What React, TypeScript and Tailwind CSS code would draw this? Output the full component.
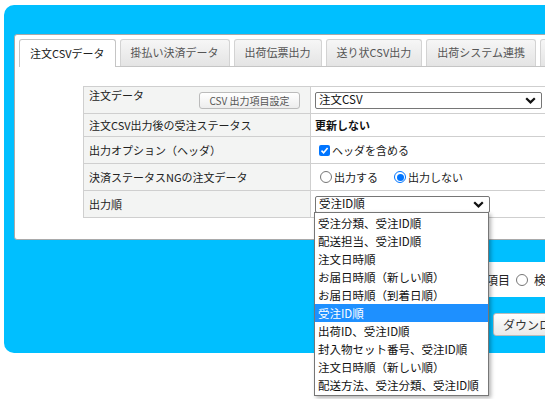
import React from "react"

const tabs = ["注文CSVデータ", "掛払い決済データ", "出荷伝票出力", "送り状CSV出力", "出荷システム連携", "その他"]

const sortOptions = [
  "受注分類、受注ID順",
  "配送担当、受注ID順",
  "注文日時順",
  "お届日時順（新しい順）",
  "お届日時順（到着日順）",
  "受注ID順",
  "出荷ID、受注ID順",
  "封入物セット番号、受注ID順",
  "注文日時順（新しい順）",
  "配送方法、受注分類、受注ID順",
]

function Chevron() {
  return (
    <svg width="11" height="7" viewBox="0 0 11 7" className="shrink-0">
      <path d="M1.2 1.2 5.5 5.4 9.8 1.2" fill="none" stroke="#111" strokeWidth="2.2" />
    </svg>
  )
}

function Select({ value, width }: { value: string; width: string }) {
  return (
    <div
      className={`flex h-[17px] items-center justify-between rounded-[2px] border border-[#767676] bg-white pl-[3px] pr-[5px] text-[11.5px] leading-none text-[#111] ${width}`}
    >
      <span>{value}</span>
      <Chevron />
    </div>
  )
}

function Radio({ checked }: { checked?: boolean }) {
  if (checked) {
    return (
      <span className="flex h-[12px] w-[12px] items-center justify-center rounded-full border-[1.5px] border-[#0075ff] bg-white">
        <span className="h-[7px] w-[7px] rounded-full bg-[#0075ff]" />
      </span>
    )
  }
  return <span className="h-[12px] w-[12px] rounded-full border border-[#767676] bg-white" />
}

function Row({
  label,
  children,
  h,
  top,
  extra,
}: {
  label: string
  children: React.ReactNode
  h: string
  top?: boolean
  extra?: React.ReactNode
}) {
  return (
    <div className={`flex border-t border-[#cfcfcf] ${h}`}>
      <div
        className={`flex w-[227px] shrink-0 justify-between border-r border-[#cfcfcf] bg-[#f3f4f3] pl-[5px] ${
          top ? "items-start" : "items-center"
        }`}
      >
        <span className="leading-[16px]">{label}</span>
        {extra}
      </div>
      <div className="flex flex-1 items-center pl-[4px]">{children}</div>
    </div>
  )
}

export default function App() {
  return (
    <div className="relative h-[399px] w-[545px] overflow-hidden bg-white font-['Noto_Sans_CJK_JP',sans-serif] text-[11px] text-[#222]">
      {/* blue panel */}
      <div className="ml-[4px] mt-[5px] h-[348px] w-[620px] rounded-l-[10px] bg-[#00bfff] pl-[10px] pt-[29px]">
        {/* tabs box */}
        <div className="h-[206px] w-[600px] rounded-[3px] border border-[#a9a9a9] bg-white p-[4px]">
          <div className="flex h-[28px] items-end gap-[4px] border-b border-[#c5c5c5]">
            {tabs.map((t, i) =>
              i === 0 ? (
                <div
                  key={t}
                  className="-mb-px h-[28px] rounded-t-[3px] border border-b-0 border-[#c5c5c5] bg-white px-[10px] leading-[26px] text-[#212121]"
                >
                  {t}
                </div>
              ) : (
                <div
                  key={t}
                  className="h-[27px] rounded-t-[3px] border border-b-0 border-[#d3d3d3] bg-gradient-to-b from-[#f6f6f6] to-[#e4e4e4] px-[10px] leading-[25px] text-[#555]"
                >
                  {t}
                </div>
              )
            )}
          </div>

          {/* settings table */}
          <div className="ml-[64px] mt-[19px] border-b border-l border-[#cfcfcf]">
            <Row
              label="注文データ"
              h="h-[27px]"
              top
              extra={
                <button className="mr-[10px] mt-[5px] h-[17px] w-[101px] rounded-[3px] border border-[#bbb] bg-gradient-to-b from-white to-[#ededed] text-[10px] leading-none text-[#555]">
                  CSV 出力項目設定
                </button>
              }
            >
              <Select value="注文CSV" width="w-[227px]" />
            </Row>
            <Row label="注文CSV出力後の受注ステータス" h="h-[23px]">
              <span className="font-bold text-[#111]">更新しない</span>
            </Row>
            <Row label="出力オプション（ヘッダ）" h="h-[27px]">
              <span className="ml-[4px] flex items-center gap-[2px]">
                <span className="flex h-[11px] w-[11px] items-center justify-center rounded-[2px] bg-[#0075ff]">
                  <svg width="9" height="9" viewBox="0 0 9 9">
                    <path d="M1.5 4.6 3.6 6.7 7.6 2" fill="none" stroke="#fff" strokeWidth="1.6" />
                  </svg>
                </span>
                <span>ヘッダを含める</span>
              </span>
            </Row>
            <Row label="決済ステータスNGの注文データ" h="h-[27px]">
              <span className="ml-[5px] flex items-center gap-[2px]">
                <Radio />
                <span>出力する</span>
              </span>
              <span className="ml-[16px] flex items-center gap-[2px]">
                <Radio checked />
                <span>出力しない</span>
              </span>
            </Row>
            <Row label="出力順" h="h-[27px]">
              <Select value="受注ID順" width="w-[175px]" />
            </Row>
          </div>
        </div>

        {/* lower form row, mostly hidden behind the open list */}
        <div className="ml-[426px] mt-[22px] flex h-[35px] items-center gap-[6px] bg-white pl-[22px] text-[12px]">
          <span>出力項目</span>
          <Radio />
          <span>検索項目</span>
        </div>
        <button className="ml-[479px] mt-[16px] flex h-[23px] items-center rounded-[3px] border border-[#bbb] bg-gradient-to-b from-white to-[#e9e9e9] pl-[9px] pr-[12px] text-[12px] text-[#333]">
          ダウンロード
        </button>
      </div>

      {/* open select list */}
      <ul className="absolute left-[314px] top-[212px] w-[175px] border border-[#767676] bg-white py-px text-[11.5px] text-[#111] shadow-[2px_2px_4px_rgba(0,0,0,0.3)]">
        {sortOptions.map((o, i) => (
          <li
            key={o}
            className={`h-[18px] pl-[3px] leading-[18px] ${i === 5 ? "bg-[#1e90ff] text-white" : ""}`}
          >
            {o}
          </li>
        ))}
      </ul>
    </div>
  )
}
